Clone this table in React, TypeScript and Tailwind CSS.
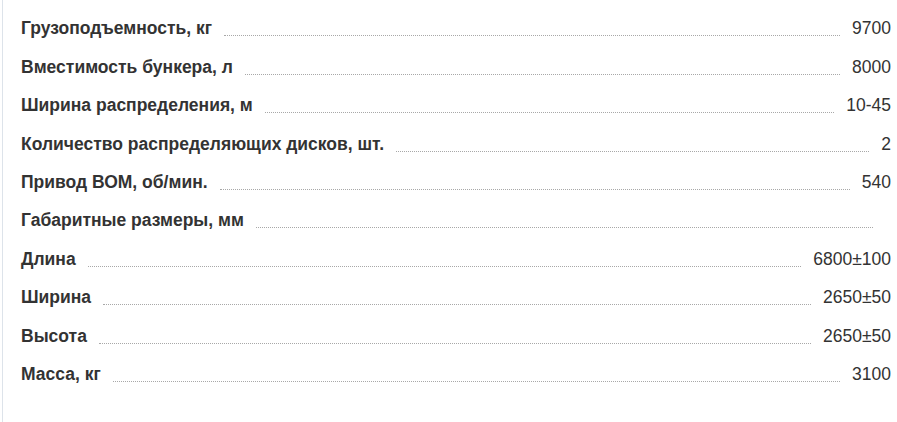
import React from "react";

const rows: [string, string][] = [
  ["Грузоподъемность, кг", "9700"],
  ["Вместимость бункера, л", "8000"],
  ["Ширина распределения, м", "10-45"],
  ["Количество распределяющих дисков, шт.", "2"],
  ["Привод ВОМ, об/мин.", "540"],
  ["Габаритные размеры, мм", ""],
  ["Длина", "6800±100"],
  ["Ширина", "2650±50"],
  ["Высота", "2650±50"],
  ["Масса, кг", "3100"],
];

export default function App() {
  return (
    <div className="w-[897px] h-[422px] bg-white overflow-hidden" style={{ fontFamily: '"Liberation Sans", Arial, sans-serif' }}>
      <div className="ml-[2px] h-full border-l border-[#dde3ea] pl-[18px] pr-[6px] pt-[9px] text-[17.5px] text-[#333]">
        {rows.map(([label, value]) => (
          <div key={label} className="flex items-end h-[38.4px] pb-[9px]">
            <span className="font-bold leading-[20px]">{label}</span>
            <span className="flex-1 mx-[12px] mb-[2px] border-b border-dotted border-[#a8a8a8]" />
            <span className={value ? "leading-[20px]" : "w-[6px]"}>{value}</span>
          </div>
        ))}
      </div>
    </div>
  );
}
